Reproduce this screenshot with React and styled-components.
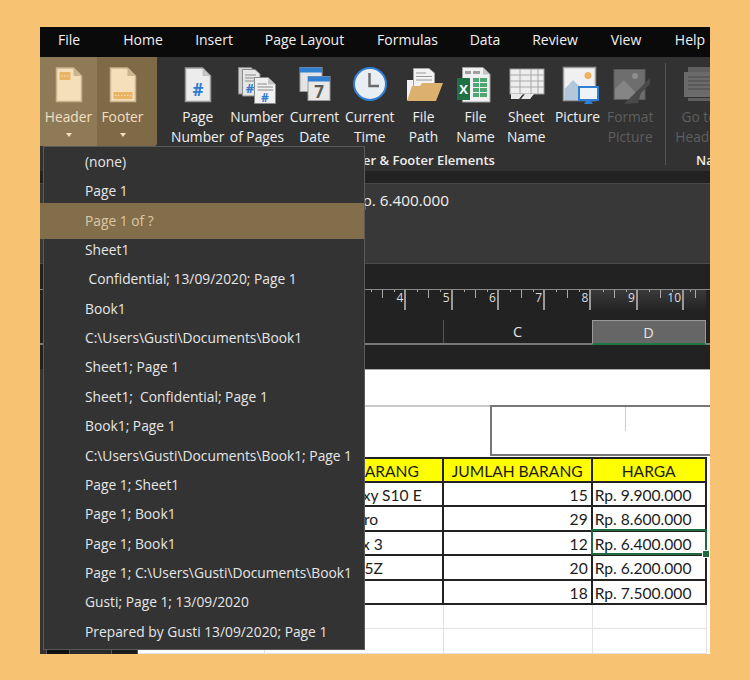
import React from "react";
import styled, { createGlobalStyle } from "styled-components";

const Global = createGlobalStyle`
  html, body { margin: 0; padding: 0; background: #f7c271; }
  * { box-sizing: border-box; }
`;

const Page = styled.div`
  width: 750px; height: 680px; padding: 27px 40px 26px; background: #f7c271;
  font-family: "Open Sans", "Noto Sans", sans-serif; position: relative; overflow: hidden;
`;
const Win = styled.div`
  width: 670px; height: 627px; display: flex; flex-direction: column; background: #222; overflow: hidden; position: relative;
`;
const Tabs = styled.div`
  height: 30px; flex: none; background: #0a0a0a; display: flex; align-items: center; color: #f1f1f1; font-size: 14px; padding-bottom: 6px;
`;
const Tab = styled.span`
  flex: none; width: ${p => p.$w}px; text-align: center;
`;
const Ribbon = styled.div`
  height: 114px; flex: none; background: #323232; display: flex;
`;
const Active = styled.div`
  width: 117px; height: 89px; flex: none; display: flex; background: #7f6a48; border-radius: 0 0 3px 3px; padding-right: 9px;
`;
const Group = styled.div`
  flex: none; width: ${p => p.$w}px; display: flex; flex-direction: column; padding-left: ${p => p.$pad || 0}px; overflow: hidden;
`;
const Buttons = styled.div`
  height: 92px; display: flex;
`;
const GroupName = styled.div`
  height: 22px; line-height: 22px; text-align: center; color: #eee; font-size: 13px; font-weight: 600; white-space: nowrap;
  padding-left: ${p => p.$pl || 0}px;
`;
const Btn = styled.div`
  flex: none; width: ${p => p.$w}px; height: ${p => p.$h || 92}px; display: flex; flex-direction: column; align-items: center;
  padding-top: 10px; font-size: 13.8px; line-height: 20px; text-align: center; white-space: nowrap;
  color: ${p => p.$off ? "#5e5e5e" : p.$warm ? "#f2dfc0" : "#f0f0f0"};
  background: ${p => p.$hi ? "#8f7a58" : "transparent"};
  svg { flex: none; display: block; overflow: visible; }
`;
const Caret = styled.i`
  display: block; width: 0; height: 0; margin-top: 6px;
  border-left: 3.5px solid transparent; border-right: 3.5px solid transparent; border-top: 4px solid #f2dfc0;
`;
const Sep = styled.div`
  flex: none; width: 1px; height: 102px; margin: 6px 0 0 8px; background: #555;
`;
const Strip = styled.div`
  height: 12px; flex: none; background: #222;
`;
const Formula = styled.div`
  height: 81px; flex: none; background: #383838; border-top: 1px solid #484848; border-bottom: 1px solid #4a4a4a;
  color: #f0f0f0; font-size: 15.3px; padding: 6px 0 0 313px; line-height: 20px;
`;
const Gap = styled.div`
  height: ${p => p.$h}px; flex: none; background: #222;
`;
const Ruler = styled.div`
  height: 31px; flex: none; display: flex; background: #222; border-top: 1px solid #888;
`;
const RulerLead = styled.div`
  flex: none; width: 320px;
`;
const RulerCell = styled.div`
  flex: none; width: ${p => p.$w || 46.3}px; height: 20px; position: relative; display: flex; justify-content: flex-end;
  border-right: ${p => p.$end ? "none" : "2px solid #999"}; padding-right: 1px;
  color: #dcdcdc; font-size: 12px; line-height: 14px; padding-top: 1px;
  background: ${p => p.$on ? "linear-gradient(#3a3a3a, #242424)" : "transparent"};
  &::before { content: ""; position: absolute; left: 50%; top: 0; width: 1px; height: 8px; background: #aaa; }
  &::after { content: ""; position: absolute; left: 25%; top: 0; width: 1px; height: 2px; background: #aaa; box-shadow: ${p => p.$w ? "none" : "23px 0 0 #aaa"}; }
`;
const ColHead = styled.div`
  height: 25px; flex: none; display: flex; background: #222; border-bottom: 2px solid #7a7a7a;
`;
const ColLead = styled.div`
  flex: none; width: 403.5px; border-right: 1px solid #555;
`;
const ColCell = styled.div`
  flex: none; width: ${p => p.$w}px; height: 25px; text-align: center; font-size: 14.5px; line-height: 24px; color: #e4e4e4;
  background: ${p => p.$on ? "#666" : "transparent"};
  border: ${p => p.$on ? "1px solid #999" : "none"};
  border-bottom: ${p => p.$on ? "2px solid #1d7a48" : "none"};
`;
const SheetArea = styled.div`
  flex: 1; display: flex; min-height: 0;
`;
const Side = styled.div`
  flex: none; width: 98px; background: #333; display: flex; align-items: flex-end;
`;
const SideBit = styled.div`
  flex: none; height: 6px; width: ${p => p.$w}px; background: ${p => p.$c}; border-right: 1px solid #555;
`;
const Sheet = styled.div`
  flex: 1; background: #fff; padding-top: 35px; font-family: Lato, "Liberation Sans", sans-serif; font-size: 15.6px; color: #1c1c1c;
  display: flex; flex-direction: column; min-width: 0; border-top: 1px solid #aaa;
`;
const SheetBody = styled.div`
  position: relative; flex: 1; display: flex; flex-direction: column;
`;
const TitleRow = styled.div`
  height: 52px; flex: none; display: flex;
`;
const TitleLead = styled.div`
  flex: none; width: 352px; border-top: 2px solid #c9c9c9;
`;
const TitleBox = styled.div`
  flex: 1; height: 51px; border: 2px solid #777; border-right: none; padding-left: 133px;
`;
const TitleTick = styled.div`
  width: 1px; height: 24px; background: #ccc;
`;
const Row = styled.div`
  height: ${p => p.$h || 24.4}px; flex: none; display: grid; grid-template-columns: 127px 178.7px 149px 114px 3px;
`;
const Blank = styled.div`
  border-bottom: 1px solid ${p => p.$grid ? "#e2e2e2" : "transparent"};
  border-right: 1px solid ${p => p.$grid ? "#e2e2e2" : "transparent"};
`;
const Cell = styled.div`
  position: relative; padding: ${p => p.$top ? 2 : 3}px ${p => p.$pr || 0}px 0 ${p => p.$pl || 0}px; line-height: ${p => p.$top ? 20 : 19}px; white-space: nowrap; overflow: hidden;
  border-right: 2px solid #222; border-bottom: 2px solid #222;
  ${p => p.$top ? "border-top: 2px solid #222;" : ""}
  ${p => p.$left ? "border-left: 2px solid #222;" : ""}
  background: ${p => p.$head ? "#ffff00" : "#fff"};
  text-align: ${p => p.$al || "left"};
`;
const Selection = styled.div`
  position: absolute; left: 452.7px; top: 123.5px; width: 116.6px; height: 26px; border: 2px solid #1d6b3f; pointer-events: none;
`;
const Handle = styled.div`
  position: absolute; right: -4px; bottom: -4px; width: 6px; height: 6px; background: #1d6b3f; outline: 1px solid #fff;
`;
const Menu = styled.div`
  position: absolute; left: 3px; top: 119px; width: 322px; height: 504px; background: #333; border: 1px solid #5a5a5a;
  display: flex; flex-direction: column; font-size: 13.8px; z-index: 5;
`;
const Item = styled.div`
  flex: none; height: ${p => p.$on ? 36 : 29.35}px; margin: ${p => p.$on ? "-2.8px 0 -3.8px -4px" : "0"};
  padding-left: ${p => p.$on ? 45 : 41}px; line-height: ${p => p.$on ? 35 : 29}px; white-space: pre; color: ${p => p.$on ? "#dcc7a4" : "#e6e6e6"};
  background: ${p => p.$on ? "#836e4c" : "transparent"};
`;

const Doc = ({ fill = "#f5dfba", edge = "#c9b48e", fold = "#c9b48e", children }) => (
  <svg width="40" height="40" viewBox="0 0 40 40">
    <path d="M7.500 1H24.500L32.500 9V34.500H7.500Z" fill={fill} stroke={edge} strokeWidth="1.500" />
    <path d="M24.500 1V9H32.500Z" fill={fold} />
    {children}
  </svg>
);
const HeaderIcon = () => (
  <Doc>
    <rect x="10.500" y="5" width="11" height="8" fill="#e9b466" />
    <path d="M12 9H20" stroke="#f5dfba" strokeDasharray="1.500 1.500" />
  </Doc>
);
const FooterIcon = () => (
  <Doc>
    <rect x="10.500" y="25" width="19" height="7" fill="#e9b466" />
    <path d="M12 28.500H28" stroke="#f5dfba" strokeDasharray="1.500 1.500" />
  </Doc>
);
const PageNum = () => (
  <Doc fill="#ececec" edge="#9a9a9a" fold="#c4c4c4">
    <text x="20" y="29" textAnchor="middle" fontSize="17" fontWeight="700" fill="#2f7bd0" fontFamily="Open Sans">#</text>
  </Doc>
);
const Pages = () => (
  <svg width="40" height="40" viewBox="0 0 40 40">
    <path d="M1.500 0.500H14L19 5V27H1.500Z" fill="#cfcfcf" stroke="#8a8a8a" />
    <path d="M5.500 2.500H18L23 7V29H5.500Z" fill="#e6e6e6" stroke="#8a8a8a" />
    <path d="M8 8H19M8 11H20M8 14H20" stroke="#8a8a8a" />
    <text x="13" y="26" textAnchor="middle" fontSize="13" fontWeight="700" fill="#2f7bd0" fontFamily="Open Sans">#</text>
    <path d="M17.500 10.500H31L38.500 17.500V36.500H17.500Z" fill="#f0f0f0" stroke="#8a8a8a" />
    <path d="M31 10.500V17.500H38.500Z" fill="#c4c4c4" />
    <path d="M20.500 17H30M20.500 20H36M20.500 23H36" stroke="#8a8a8a" />
    <text x="28" y="35" textAnchor="middle" fontSize="12" fontWeight="700" fill="#2f7bd0" fontFamily="Open Sans">#</text>
  </svg>
);
const DateIcon = () => (
  <svg width="40" height="40" viewBox="0 0 40 40">
    <rect x="5" y="0.500" width="22" height="24" fill="#e4e4e4" stroke="#9a9a9a" />
    <rect x="5" y="0.500" width="22" height="5" fill="#2f7fd3" />
    <rect x="13" y="9.500" width="22" height="24" fill="#e8e8e8" stroke="#9a9a9a" />
    <rect x="13" y="9.500" width="22" height="5" fill="#2f7fd3" />
    <text x="24" y="31" textAnchor="middle" fontSize="17" fontWeight="700" fill="#5a5a5a" fontFamily="Open Sans">7</text>
  </svg>
);
const ClockIcon = () => (
  <svg width="40" height="40" viewBox="0 0 40 40">
    <circle cx="20" cy="17" r="16" fill="#e9eef3" stroke="#2f7fd3" strokeWidth="2" />
    <path d="M19.500 6V19H29" fill="none" stroke="#6a6a6a" strokeWidth="2.400" />
  </svg>
);
const FolderIcon = () => (
  <svg width="40" height="40" viewBox="0 0 40 40">
    <path d="M3 13V33H25V13Z" fill="#f2f2f2" />
    <path d="M9.500 1.500H25L30.500 6V24H9.500Z" fill="#f2f2f2" stroke="#a0a0a0" />
    <path d="M12 6H22M12 9.500H28M12 13H28" stroke="#9a9a9a" />
    <path d="M3 34L8 19H16L18 16H39L32 34Z" fill="#dcb06d" />
  </svg>
);
const ExcelIcon = () => (
  <svg width="40" height="40" viewBox="0 0 40 40">
    <path d="M6.500 0.500H27L34 7.500V35H6.500Z" fill="#f0f0f0" stroke="#a0a0a0" />
    <path d="M27 0.500V7.500H34Z" fill="#c4c4c4" />
    <path d="M9 4H15V7H9ZM17 4H24V7H17Z" fill="#a0a0a0" />
    <path d="M17 11H23V15H17ZM24 11H31V15H24ZM17 16H23V20H17ZM24 16H31V20H24ZM17 21H23V25H17ZM24 21H31V25H24ZM17 26H23V30H17ZM24 26H31V30H24Z" fill="#4ea772" />
    <rect x="1" y="11" width="13" height="22" fill="#1e7145" />
    <text x="7.500" y="27" textAnchor="middle" fontSize="13" fontWeight="700" fill="#fff" fontFamily="Open Sans">X</text>
  </svg>
);
const GridIcon = () => (
  <svg width="40" height="40" viewBox="0 0 40 40">
    <rect x="4" y="2" width="34" height="25" fill="#eeeeee" stroke="#9a9a9a" />
    <path d="M4 8H38M4 14H38M4 20H38M14 2V27M25 2V27M32 2V27" stroke="#a8a8a8" />
    <path d="M5 27H17L13 32H5ZM19 27H28L24 32H15Z" fill="#e8e8e8" />
  </svg>
);
const PictureIcon = () => (
  <svg width="40" height="40" viewBox="0 0 40 40">
    <rect x="5.500" y="0.500" width="32" height="33" fill="#f0f0f0" stroke="#9a9a9a" strokeWidth="1.500" />
    <path d="M6.500 33V22L15 13L28 26V33Z" fill="#b3c7dc" />
    <circle cx="30" cy="8.500" r="3.500" fill="#edb35f" />
    <rect x="21" y="20" width="19" height="13" fill="#eef3f8" stroke="#2f7fd3" strokeWidth="2" />
    <path d="M28 34H33L35 37H26Z" fill="#2f7fd3" />
  </svg>
);
const FormatIcon = () => (
  <svg width="40" height="40" viewBox="0 0 40 40">
    <rect x="4" y="2.500" width="31" height="30" fill="#6e6e6e" stroke="#5a5a5a" />
    <path d="M5 32V22L14 13L26 26V32Z" fill="#858585" />
    <circle cx="25" cy="9" r="3" fill="#8e8e8e" />
    <path d="M40 11L27 24L22 29L14 37L28 36L31 26L40 17Z" fill="#4a4a4a" />
  </svg>
);
const GotoIcon = () => (
  <svg width="40" height="40" viewBox="0 0 40 40">
    <rect x="9" y="0" width="24" height="5" fill="#5f5f5f" />
    <rect x="5" y="5" width="32" height="25" fill="#6b6b6b" />
    <path d="M9 10H33M9 14H33M9 18H33M9 22H33" stroke="#4a4a4a" />
    <rect x="9" y="31" width="24" height="3" fill="#5f5f5f" />
  </svg>
);

const tabs = [["File", 58], ["Home", 90], ["Insert", 52], ["Page Layout", 129], ["Formulas", 77], ["Data", 78], ["Review", 62], ["View", 80], ["Help", 48]];
const buttons = [
  [59.5, PageNum, "Page", "Number"], [59, Pages, "Number", "of Pages"], [56, DateIcon, "Current", "Date"],
  [54.5, ClockIcon, "Current", "Time"], [53, FolderIcon, "File", "Path"], [51, ExcelIcon, "File", "Name"],
  [50.5, GridIcon, "Sheet", "Name"], [52, PictureIcon, "Picture", ""],
];
const menu = ["(none)", "Page 1", "Page 1 of ?", "Sheet1", " Confidential; 13/09/2020; Page 1", "Book1",
  "C:\\Users\\Gusti\\Documents\\Book1", "Sheet1; Page 1", "Sheet1;  Confidential; Page 1", "Book1; Page 1",
  "C:\\Users\\Gusti\\Documents\\Book1; Page 1", "Page 1; Sheet1", "Page 1; Book1", "Page 1; Book1",
  "Page 1; C:\\Users\\Gusti\\Documents\\Book1", "Gusti; Page 1; 13/09/2020", "Prepared by Gusti 13/09/2020; Page 1"];
const data = [["Samsung Galaxy S10 E", 15, "Rp. 9.900.000"], ["Huawei P30 Pro", 29, "Rp. 8.600.000"], ["Xiaomi Mi Max 3", 12, "Rp. 6.400.000"], ["Asus Zenfone 5Z", 20, "Rp. 6.200.000"], ["Vivo V15", 18, "Rp. 7.500.000"]];

export default function App() {
  return (
    <Page>
      <Global />
      <Win>
        <Tabs>{tabs.map(([t, w]) => <Tab key={t} $w={w}>{t}</Tab>)}</Tabs>
        <Ribbon>
          <Active>
            <Btn $w={57} $h={89} $hi $warm><HeaderIcon />Header<Caret /></Btn>
            <Btn $w={51} $h={89} $warm><FooterIcon />Footer<Caret /></Btn>
          </Active>
          <Group $w={500} $pad={11}>
            <Buttons>
              {buttons.map(([w, Icon, a, b]) => (
                <Btn key={a + b} $w={w}><Icon />{a}<br />{b}</Btn>
              ))}
              <Btn $w={53.5} $off><FormatIcon />Format<br />Picture</Btn>
            </Buttons>
            <GroupName>Header &amp; Footer Elements</GroupName>
          </Group>
          <Sep />
          <Group $w={110} $pad={8}>
            <Buttons><Btn $w={50} $off><GotoIcon />Go to<br />Header</Btn></Buttons>
            <GroupName $pl={10}>Navigation</GroupName>
          </Group>
        </Ribbon>
        <Strip />
        <Formula>Rp. 6.400.000</Formula>
        <Gap $h={25} />
        <Ruler>
          <RulerLead />
          {[4, 5, 6, 7, 8].map(n => <RulerCell key={n}>{n}</RulerCell>)}
          <RulerCell $on>9</RulerCell>
          <RulerCell $on>10</RulerCell>
          <RulerCell $on $w={22} $end />
        </Ruler>
        <ColHead>
          <ColLead />
          <ColCell $w={148}>C</ColCell>
          <ColCell $w={114} $on>D</ColCell>
        </ColHead>
        <Gap $h={24} />
        <SheetArea>
          <Side>
            <SideBit $w={7} $c="#333" />
            <SideBit $w={23} $c="#111" />
            <SideBit $w={42} $c="#2a2a2a" />
            <SideBit $w={26} $c="#1c1c1c" />
          </Side>
          <Sheet>
            <SheetBody>
              <TitleRow>
                <TitleLead />
                <TitleBox><TitleTick /></TitleBox>
              </TitleRow>
              <Row $h={26}>
                <Blank />
                <Cell $head $top $left $al="center" $pl={14}>NAMA BARANG</Cell>
                <Cell $head $top $al="center">JUMLAH BARANG</Cell>
                <Cell $head $top $al="center">HARGA</Cell>
              </Row>
              {data.map(([n, q, p]) => (
                <Row key={n}>
                  <Blank />
                  <Cell $left>{n}</Cell>
                  <Cell $al="right" $pr={3}>{q}</Cell>
                  <Cell $pl={2}>{p}</Cell>
                </Row>
              ))}
              <Row><Blank $grid /><Blank $grid /><Blank $grid /><Blank $grid /></Row>
              <Row><Blank $grid /><Blank $grid /><Blank $grid /><Blank $grid /></Row>
              <Selection><Handle /></Selection>
            </SheetBody>
          </Sheet>
        </SheetArea>
        <Menu>
          {menu.map((m, i) => <Item key={i} $on={i === 2}>{m}</Item>)}
        </Menu>
      </Win>
    </Page>
  );
}
